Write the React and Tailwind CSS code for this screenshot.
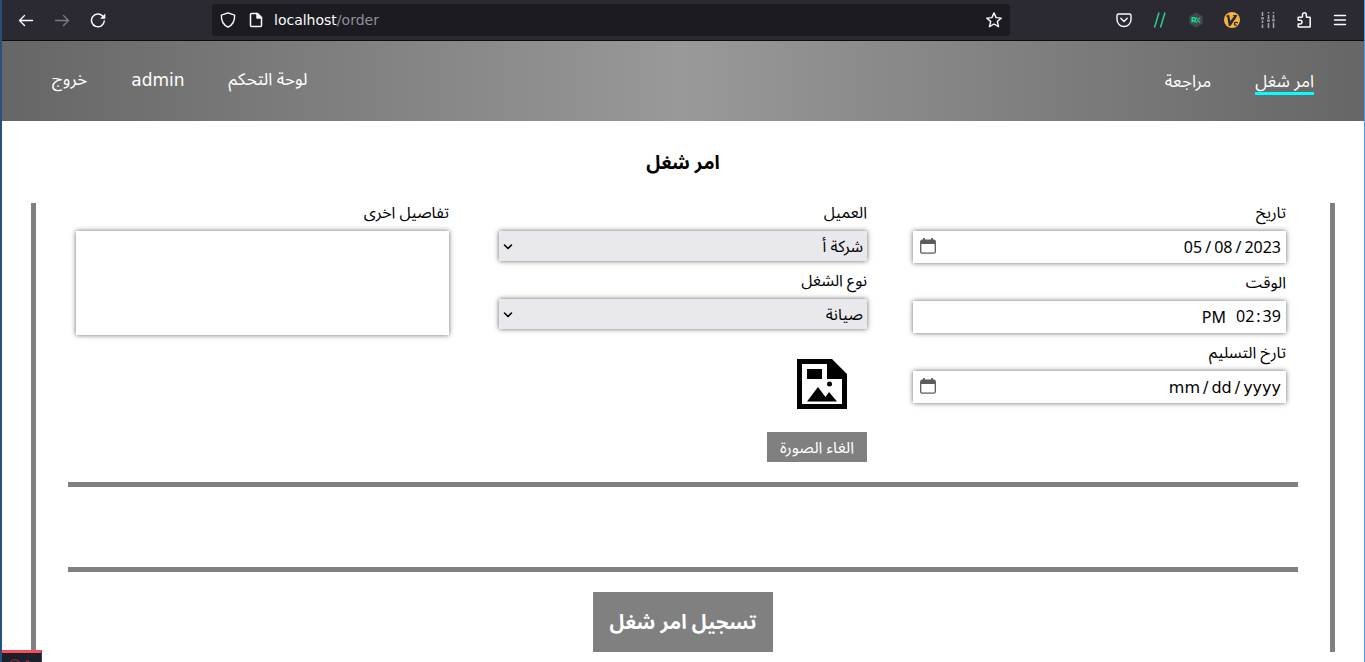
import React from "react";

const fieldShadow = "shadow-[0_0_5px_rgba(0,0,0,0.6)]";
const dateField =
  "block h-8 w-full bg-white pt-0.5 text-right text-base text-black outline-none " +
  "[&::-webkit-datetime-edit]:flex [&::-webkit-datetime-edit]:justify-end [&::-webkit-datetime-edit]:p-0 " +
  "[&::-webkit-datetime-edit-fields-wrapper]:flex [&::-webkit-datetime-edit-fields-wrapper]:p-0 " +
  "[&::-webkit-calendar-picker-indicator]:hidden " +
  fieldShadow;

function Toolbar() {
  return (
    <div
      dir="ltr"
      className="flex h-[41px] items-center border-b border-[#0c0c0d] bg-[#2b2a33] text-[#fbfbfe]"
    >
      <div className="flex w-[210px] shrink-0 items-center gap-5 pl-4">
        <button aria-label="Back">
          <svg className="size-4" viewBox="0 0 16 16" fill="none" stroke="currentColor" strokeWidth="1.4" strokeLinecap="round" strokeLinejoin="round">
            <path d="M14.500 8.500H1.500M6.500 3.500 1.500 8.500l5 5" />
          </svg>
        </button>
        <button aria-label="Forward" className="text-[#7b7a82]">
          <svg className="size-4" viewBox="0 0 16 16" fill="none" stroke="currentColor" strokeWidth="1.4" strokeLinecap="round" strokeLinejoin="round">
            <path d="M1.500 8.500h13M9.500 3.500l5 5-5 5" />
          </svg>
        </button>
        <button aria-label="Reload">
          <svg className="size-4" viewBox="0 0 16 16" fill="none" stroke="currentColor" strokeWidth="1.5" strokeLinecap="round">
            <path d="M12.600 4A6.400 6.400 0 1 0 14.300 9" />
            <path d="M15.300 1.500v5.200h-5.200z" fill="currentColor" stroke="none" />
          </svg>
        </button>
      </div>
      <div className="flex h-8 w-[798px] min-w-0 items-center rounded bg-[#1c1b22] px-2">
        <svg className="size-4 shrink-0" viewBox="0 0 16 16" fill="none" stroke="currentColor" strokeWidth="1.4" strokeLinejoin="round">
          <path d="M8 .8 14.6 3.2c.3 5-1.400 9.300-6.600 12C2.800 12.500 1.100 8.200 1.400 3.200z" />
        </svg>
        <svg className="ml-3 size-4 shrink-0" viewBox="0 0 16 16" fill="none" stroke="currentColor" strokeWidth="1.5" strokeLinejoin="round">
          <path d="M3.500 1.500h6l4 4v8a1 1 0 0 1-1 1h-9a1 1 0 0 1-1-1v-11a1 1 0 0 1 1-1z" />
          <path d="M9 1.500v4.500h4.500z" fill="currentColor" />
        </svg>
        <div className="ml-2.5 flex-1 font-['DejaVu_Sans',sans-serif] text-sm">
          localhost<span className="text-[#8f8f9a]">/order</span>
        </div>
        <button aria-label="Bookmark">
          <svg className="size-4" viewBox="0 0 16 16" fill="none" stroke="currentColor" strokeWidth="1.4" strokeLinejoin="round">
            <path d="m8 .9 2.100 4.700 5.100.5-3.900 3.400 1.200 5.200L8 12l-4.500 2.700 1.200-5.200L.8 6.100l5.100-.5z" />
          </svg>
        </button>
      </div>
      <div className="ml-auto flex items-center gap-5 pr-4">
        <button aria-label="Pocket">
          <svg className="size-4" viewBox="0 0 16 16" fill="none" stroke="currentColor" strokeWidth="1.400" strokeLinecap="round" strokeLinejoin="round">
            <path d="M2.500 2h11a1.500 1.500 0 0 1 1.500 1.500v4a7 7 0 0 1-14 0v-4A1.500 1.500 0 0 1 2.500 2z" />
            <path d="m4.800 6.300 3.200 3.100 3.200-3.100" />
          </svg>
        </button>
        <button aria-label="Slashes">
          <svg className="size-4" viewBox="0 0 16 16" fill="none" stroke="#2fce8b" strokeWidth="1.500">
            <path d="M2.500 15.500 7 .5M8.500 15.500 13 .5" />
          </svg>
        </button>
        <button aria-label="RX">
          <svg className="size-4" viewBox="0 0 16 16">
            <path d="m8 .5 6.700 3.700v7.600L8 15.500l-6.700-3.700V4.200z" fill="#3d4a48" />
            <g fill="none" strokeWidth="1.500">
              <path d="M4.200 10.500V5.800h1.900a1.400 1.400 0 0 1 0 2.900H4.500M6 8.500 7.600 10.500" stroke="#0be08f" />
              <path d="m8 5.400 4 5.300M12 5.400 8 10.700" stroke="#3c9c80" />
            </g>
          </svg>
        </button>
        <button aria-label="Vimium">
          <svg className="size-4" viewBox="0 0 16 16">
            <circle cx="8" cy="8" r="8" fill="#f6b344" />
            <path d="M2 4 5 2.600l1.400 6.400 3.600-4.800-1.400-1.200h4.600c0 1-.5 1.800-1 2.500L6.500 14H4.800L3.300 5z" fill="#2b2a33" />
            <path d="M14 11c-1.800-1.300-3.700-.4-3.600 1 .1 1.400 1.800 1.500 2.200.8" fill="none" stroke="#2b2a33" strokeWidth="1.300" />
          </svg>
        </button>
        <button aria-label="Mixer">
          <svg className="size-4" viewBox="0 0 16 16" fill="none" stroke="#a5a4aa" strokeWidth="1.500">
            <path d="M2.500 0v4M2.500 8.500v2.500M2.500 12.500V16M8.500 0v1.500M8.500 3v4M8.500 11v5M13.500 0v1.500M13.500 3v3.500M13.500 10.500V16" />
            <path d="M1 5h3v2.500H1zM7 7.500h3V10H7zM12 7h3v2.500h-3z" fill="#85848b" stroke="none" />
          </svg>
        </button>
        <button aria-label="Extensions">
          <svg className="size-4" viewBox="0 0 16 16" fill="none" stroke="currentColor" strokeWidth="1.500" strokeLinejoin="round">
            <path d="M2.200 5.200h3.600a.7.7 0 0 0 .7-.7V2.700a1.900 1.900 0 0 1 3.800 0v1.800a.7.7 0 0 0 .7.7h2.500a.7.7 0 0 1 .7.7v8.500a.7.7 0 0 1-.7.700H2.900a.7.7 0 0 1-.7-.7v-2.500h2a1.800 1.800 0 0 0 0-3.600h-2z" />
          </svg>
        </button>
        <button aria-label="Menu">
          <svg className="size-4" viewBox="0 0 16 16" stroke="currentColor" strokeWidth="1.400" strokeLinecap="round">
            <path d="M2.500 3.500h11M2.500 8h11M2.500 12.500h11" />
          </svg>
        </button>
      </div>
    </div>
  );
}

function NavBar() {
  return (
    <nav className="flex h-20 items-center justify-between bg-[linear-gradient(to_right,#666,#999,#666)] px-[50px] text-[17px] text-white">
      <div className="flex gap-11">
        <a href="#order" className="border-b-[3px] border-[#00ffff] pt-1 leading-5">امر شغل</a>
        <a href="#review" className="border-b-[3px] border-transparent pt-1 leading-5">مراجعة</a>
      </div>
      <div className="flex gap-11">
        <a href="#panel">لوحة التحكم</a>
        <a href="#admin" className="font-['DejaVu_Sans',sans-serif]">admin</a>
        <a href="#logout">خروج</a>
      </div>
    </nav>
  );
}

function Label({ id, children }) {
  return (
    <label htmlFor={id} className="block h-7 leading-5">
      {children}
    </label>
  );
}

function DateField({ id, label, value }) {
  return (
    <div>
      <Label id={id}>{label}</Label>
      <div className="relative">
        <input
          id={id}
          type="date"
          dir="ltr"
          defaultValue={value}
          className={
            dateField +
            " px-1 [&::-webkit-datetime-edit-text]:px-0.5 " +
            (value ? "" : "font-['DejaVu_Sans',sans-serif]")
          }
        />
        <svg className="pointer-events-none absolute top-[7px] left-[7px] h-4 w-4" viewBox="0 0 16 16" fill="none" stroke="#5b5b5b">
          <rect x=".7" y="2.200" width="14.600" height="13" rx="1.500" strokeWidth="1.300" />
          <path d="M1 2h14v4H1z" fill="#5b5b5b" stroke="none" />
          <path d="M4 0v3M12 0v3" strokeWidth="1.800" />
        </svg>
      </div>
    </div>
  );
}

function SelectField({ id, label, option }) {
  return (
    <div>
      <Label id={id}>{label}</Label>
      <div className="relative">
        <select id={id} className={"block h-[30px] w-full appearance-none bg-[#e9e9ed] px-1 pt-0.5 text-black outline-none " + fieldShadow}>
          <option>{option}</option>
        </select>
        <svg className="pointer-events-none absolute top-[11px] left-1 size-2.5" viewBox="0 0 10 10" fill="none" stroke="#000" strokeWidth="1.600" strokeLinecap="round" strokeLinejoin="round">
          <path d="m1.500 3 3.500 3.500L8.500 3" />
        </svg>
      </div>
    </div>
  );
}

export default function App() {
  return (
    <div className="min-h-screen border-r border-l-2 border-r-[#3aa0f5] border-l-[#24527d] bg-white font-['Noto_Sans_Arabic','Noto_Sans_Arabic_UI','Noto_Sans','Open_Sans','DejaVu_Sans',sans-serif] text-base text-black">
      <Toolbar />
      <div dir="rtl">
        <NavBar />
        <main className="px-[29px] pb-2.5">
          <h1 className="flex h-[82px] items-center justify-center pt-0.5 text-[19px] font-bold">امر شغل</h1>
          <form className="border-x-[5px] border-[#808080] px-8">
            <div className="grid grid-cols-[373fr_368fr_377fr] gap-[46px] ps-3 pe-2">
              <div className="flex flex-col gap-2.5">
                <DateField id="date" label="تاريخ" value="2023-05-08" />
                <div>
                  <Label id="time">الوقت</Label>
                  <input
                    id="time"
                    type="time"
                    dir="ltr"
                    defaultValue="14:39"
                    className={
                      dateField +
                      " px-0 [&::-webkit-datetime-edit-ampm-field]:order-first [&::-webkit-datetime-edit-ampm-field]:mr-2 [&::-webkit-datetime-edit-text]:px-px"
                    }
                  />
                </div>
                <DateField id="delivery" label="تارخ التسليم" />
              </div>
              <div className="flex flex-col gap-2.5">
                <SelectField id="client" label="العميل" option="شركة أ" />
                <SelectField id="kind" label="نوع الشغل" option="صيانة" />
                <div className="pt-5">
                  <svg className="ms-5 size-[50px]" viewBox="0 0 50 50">
                    <path d="M0 0h35l15 15v35H0zM5 5v40h40V20H30V5z" fillRule="evenodd" />
                    <path d="M10 10h15v10H10zM10 42.500 21 28l7.500 10L32 33l8 9.500z" />
                    <circle cx="32.500" cy="25" r="2.500" />
                  </svg>
                  <button type="button" className="mt-[23px] block h-[30px] w-[100px] bg-[#808080] pt-0.5 text-white">
                    الغاء الصورة
                  </button>
                </div>
              </div>
              <div className="ps-1">
                <Label id="details">تفاصيل اخرى</Label>
                <textarea id="details" className={"block h-[104px] w-full resize-none bg-white p-1 outline-none " + fieldShadow} />
              </div>
            </div>
            <div className="mt-5 h-[90px] border-y-[5px] border-[#808080]" />
            <button type="button" className="mx-auto mt-5 block h-[60px] w-[180px] bg-[#808080] pt-0.5 text-xl font-bold text-white">
              تسجيل امر شغل
            </button>
          </form>
        </main>
      </div>
      <div className="fixed bottom-0 left-0.5 h-3 w-10 overflow-hidden border-t-[3px] border-r border-t-[#fb4b57] border-r-[#3a3f4a] bg-[#1a202c]">
        <svg className="h-[9px] w-10" viewBox="0 0 40 9" fill="none" stroke="#b3262f" strokeWidth="1.200">
          <path d="M8.500 9c2-3 7-3 9 0M24 9l1.500-1.500L27 9" />
        </svg>
      </div>
    </div>
  );
}
